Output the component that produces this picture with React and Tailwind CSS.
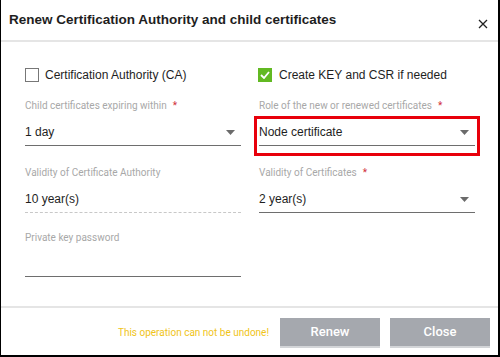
import React from "react";

const Arrow = () => (
  <svg width="9" height="5" viewBox="0 0 9 5" className="shrink-0">
    <path d="M0 0 L9 0 L4.5 5 Z" fill="#6b6b6b" />
  </svg>
);

const Label = ({ text, required }) => (
  <div className="h-[14px] text-[10px] leading-[14px] text-[#a8a8a8] font-['Roboto',sans-serif]">
    {text}
    {required && <span className="ml-[6px] text-[#d0303a]">*</span>}
  </div>
);

const Select = ({ value, children }) => (
  <div className="relative flex items-center justify-between h-[27px] border-b border-[#6e6e6e] pr-[6px] text-[12px] text-[#1e1e1e]">
    <span>{value}</span>
    <Arrow />
    {children}
  </div>
);

const App = () => {
  return (
    <div className="w-[500px] h-[357px] bg-white border-l border-r-2 border-b-2 border-black flex flex-col font-['Liberation_Sans',Arial,sans-serif] overflow-hidden">
      {/* header */}
      <div className="h-[42px] shrink-0 flex items-center justify-between pl-[8px] pr-[10px] border-b-2 border-[#e5e5e5]">
        <h1 className="text-[13.5px] font-bold text-[#1e1e1e] pt-[1px]">
          Renew Certification Authority and child certificates
        </h1>
        <svg width="10" height="10" viewBox="0 0 10 10" className="mt-[7px]">
          <path d="M1 1 L9 9 M9 1 L1 9" stroke="#222" strokeWidth="1.3" />
        </svg>
      </div>

      {/* body */}
      <div className="flex-1 grid grid-cols-[216px_216px] gap-x-[18px] pl-[24px] pt-[23px] content-start">
        {/* left column */}
        <div className="flex flex-col">
          <div className="flex items-center h-[20px] gap-[6px] text-[12px] text-[#1e1e1e]">
            <span className="w-[14px] h-[14px] border border-[#777] bg-white shrink-0" />
            <span>Certification Authority (CA)</span>
          </div>

          <div className="mt-[14px] flex flex-col gap-[6px]">
            <Label text="Child certificates expiring within" required />
            <Select value="1 day" />
          </div>

          <div className="mt-[20px] flex flex-col gap-[6px]">
            <Label text="Validity of Certificate Authority" />
            <div className="flex items-center h-[27px] border-b border-dashed border-[#c8c8c8] text-[12px] text-[#1e1e1e]">
              10 year(s)
            </div>
          </div>

          <div className="mt-[18px] flex flex-col gap-[6px]">
            <Label text="Private key password" />
            <div className="h-[26px] border-b border-[#6e6e6e]" />
          </div>
        </div>

        {/* right column */}
        <div className="flex flex-col">
          <div className="flex items-center h-[20px] gap-[7px] text-[12px] text-[#1e1e1e] -ml-[1px]">
            <span className="w-[14px] h-[14px] bg-[#62b922] flex items-center justify-center shrink-0">
              <svg width="10" height="8" viewBox="0 0 10 8">
                <path d="M1 4 L4 7 L9 1" stroke="#fff" strokeWidth="1.8" fill="none" />
              </svg>
            </span>
            <span>Create KEY and CSR if needed</span>
          </div>

          <div className="mt-[14px] flex flex-col gap-[6px]">
            <Label text="Role of the new or renewed certificates" required />
            <Select value="Node certificate">
              <div className="absolute -left-[5px] -right-[5px] -top-[3px] -bottom-[11px] border-[3px] border-[#e8000b] pointer-events-none" />
            </Select>
          </div>

          <div className="mt-[20px] flex flex-col gap-[6px]">
            <Label text="Validity of Certificates" required />
            <Select value="2 year(s)" />
          </div>
        </div>
      </div>

      {/* footer */}
      <div className="h-[49px] shrink-0 border-t-2 border-[#e5e5e5] flex items-center justify-end gap-[10px] pr-[8px] pt-[2px]">
        <span className="text-[10px] text-[#f0c419] font-['Roboto',sans-serif] mr-[1px]">
          This operation can not be undone!
        </span>
        <button className="w-[100px] h-[30px] bg-[#a5a8ae] border-b-2 border-[#d3d5d8] text-white text-[13px] font-medium font-['Roboto',sans-serif]">
          Renew
        </button>
        <button className="w-[100px] h-[30px] bg-[#a5a8ae] border-b-2 border-[#d3d5d8] text-white text-[13px] font-medium font-['Roboto',sans-serif]">
          Close
        </button>
      </div>
    </div>
  );
};

export default App;
